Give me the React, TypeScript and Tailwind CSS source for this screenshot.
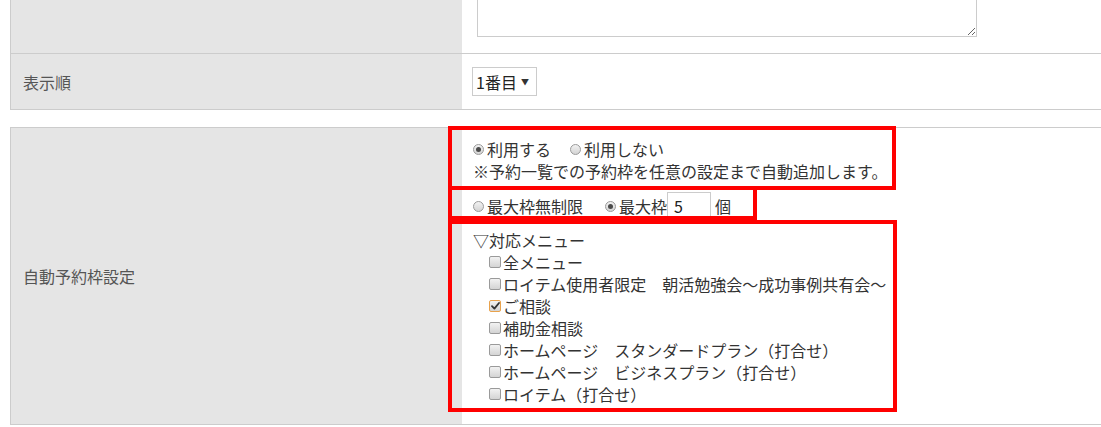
import React from "react";

const FONT = "font-['Noto_Sans_CJK_JP','Noto_Sans',sans-serif]";

function Radio({ checked = false }: { checked?: boolean }) {
  return (
    <span className="mr-[3px] inline-flex h-[11px] w-[11px] shrink-0 items-center justify-center rounded-full border border-[#9a9a9a] bg-gradient-to-b from-[#f2f2f2] to-[#d4d4d4]">
      {checked && <span className="h-[5px] w-[5px] rounded-full bg-[#4a4a4a]" />}
    </span>
  );
}

function Checkbox({ checked = false }: { checked?: boolean }) {
  return (
    <span
      className={`mr-[2px] inline-flex h-[12px] w-[12px] shrink-0 items-center justify-center rounded-[2px] border bg-gradient-to-b from-[#f2f2f2] to-[#d4d4d4] ${
        checked ? "border-[#e9a24c]" : "border-[#9a9a9a]"
      }`}
    >
      {checked && (
        <svg width="9" height="8" viewBox="0 0 9 8" fill="none">
          <path
            d="M1 4.2 3.4 6.6 8 1"
            stroke="#333"
            strokeWidth="1.8"
            strokeLinecap="round"
            strokeLinejoin="round"
          />
        </svg>
      )}
    </span>
  );
}

const menus = [
  { label: "全メニュー" },
  { label: "ロイテム使用者限定　朝活勉強会〜成功事例共有会〜" },
  { label: "ご相談", checked: true },
  { label: "補助金相談" },
  { label: "ホームページ　スタンダードプラン（打合せ）" },
  { label: "ホームページ　ビジネスプラン（打合せ）" },
  { label: "ロイテム（打合せ）" },
];

export default function App() {
  return (
    <div
      className={`h-[427px] w-[1101px] overflow-hidden bg-white text-[16px] text-[#333] ${FONT}`}
    >
      {/* upper table */}
      <div className="ml-[10px]">
        <div className="flex h-[54px] border-b border-l border-[#ccc]">
          <div className="w-[451px] shrink-0 bg-[#e5e5e5]" />
          <div className="flex flex-1 items-end overflow-hidden pb-[16px] pl-[15px]">
            <textarea
              readOnly
              className="h-[100px] w-[500px] shrink-0 resize border border-[#ccc] bg-white"
            />
          </div>
        </div>
        <div className="flex h-[56px] border-b border-l border-[#ccc]">
          <div className="flex w-[451px] shrink-0 items-center bg-[#e5e5e5] pl-[12px] text-[#555]">
            表示順
          </div>
          <div className="flex flex-1 items-center pl-[10px]">
            <div className="flex h-[29px] w-[65px] items-center border border-[#ccc] bg-white pl-[3px] leading-none text-[#222]">
              1番目
              <span className="ml-[4px] text-[8px] text-[#333]">▼</span>
            </div>
          </div>
        </div>
      </div>

      <div className="h-[17px]" />

      {/* auto reservation settings */}
      <div className="relative ml-[10px] flex border-b border-l border-t border-[#ccc]">
        <div className="flex w-[451px] shrink-0 items-center bg-[#e5e5e5] pl-[12px] text-[#555]">
          自動予約枠設定
        </div>
        <div className="flex-1 pb-[19px] pl-[11px] pt-[10px] leading-[22px]">
          <div className="flex items-center">
            <Radio checked />
            <span>利用する</span>
            <span className="ml-[19px] flex items-center">
              <Radio />
              <span>利用しない</span>
            </span>
          </div>
          <div>※予約一覧での予約枠を任意の設定まで自動追加します。</div>

          <div className="mt-[10px] flex h-[28px] items-center">
            <Radio />
            <span>最大枠無制限</span>
            <span className="ml-[22px] flex items-center">
              <Radio checked />
              <span>最大枠</span>
            </span>
            <div className="flex h-[28px] w-[44px] items-center border border-[#ccc] pl-[6px] text-[#222]">
              5
            </div>
            <span className="ml-[4px]">個</span>
          </div>

          <div className="mt-[9px]">
            <div>▽対応メニュー</div>
            {menus.map((m) => (
              <div key={m.label} className="ml-[16px] flex items-center whitespace-nowrap">
                <Checkbox checked={m.checked} />
                <span>{m.label}</span>
              </div>
            ))}
          </div>
        </div>

        {/* red annotation boxes */}
        <div className="pointer-events-none absolute left-[437px] top-[-2px] h-[64px] w-[448px] border-4 border-[#ff0000]" />
        <div className="pointer-events-none absolute left-[437px] top-[58px] h-[34px] w-[309px] border-4 border-[#ff0000]" />
        <div className="pointer-events-none absolute left-[437px] top-[92px] h-[192px] w-[449px] border-4 border-[#ff0000]" />
      </div>
    </div>
  );
}
